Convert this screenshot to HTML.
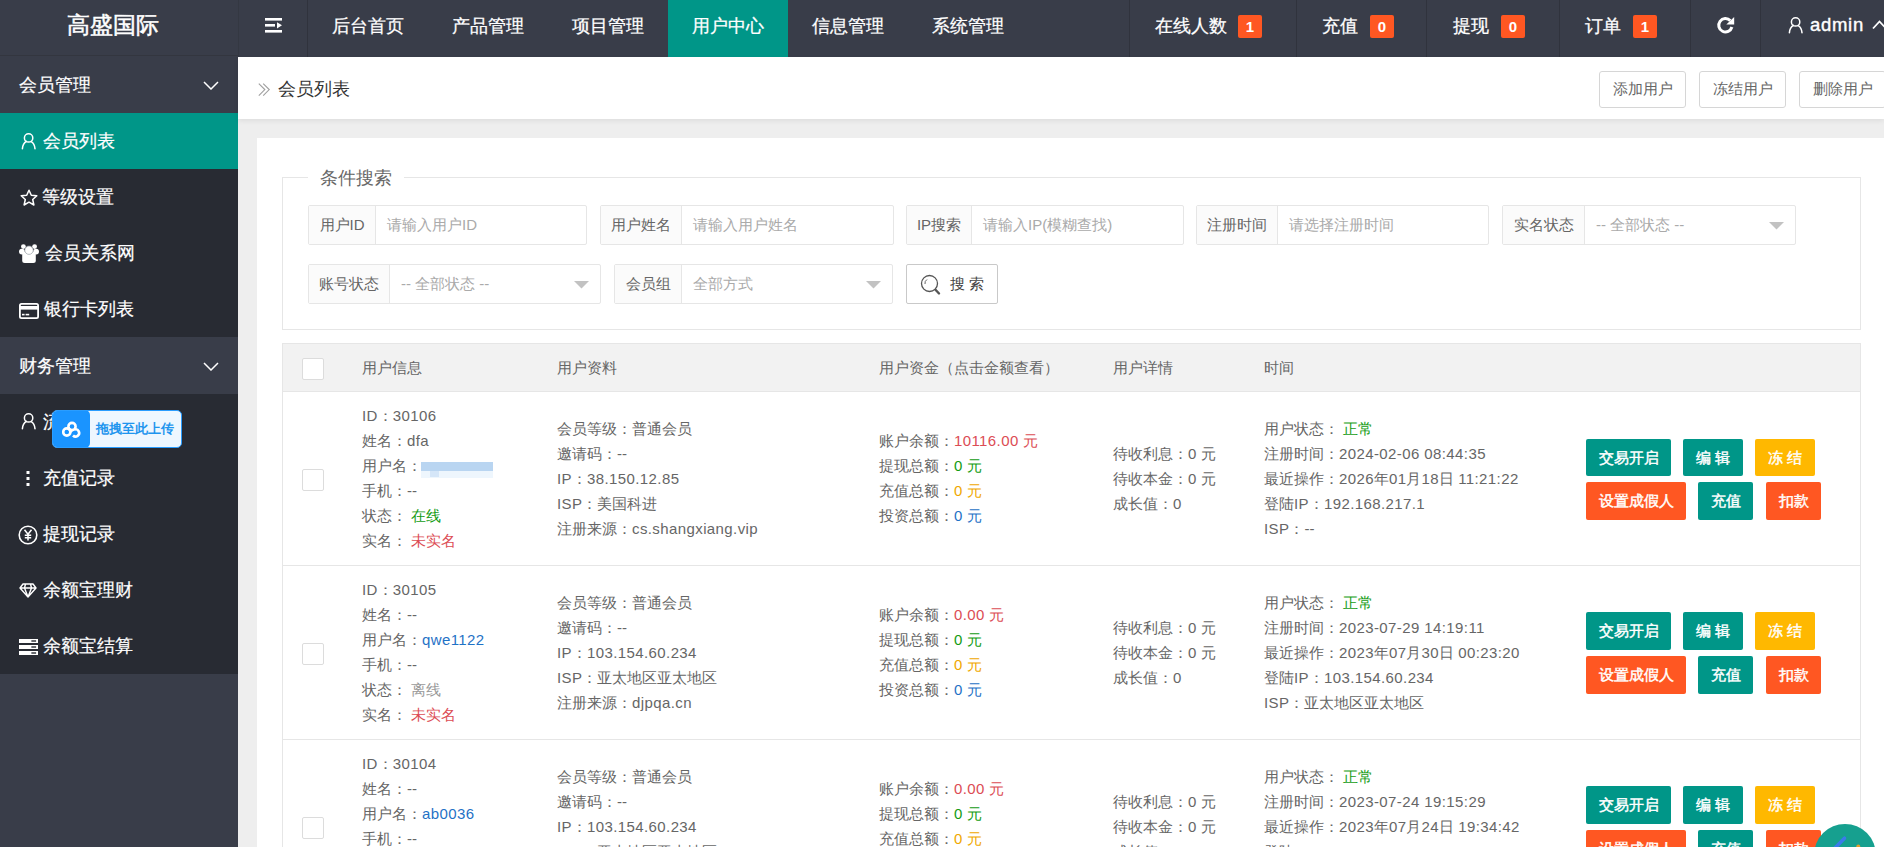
<!DOCTYPE html>
<html><head><meta charset="utf-8">
<style>
*{margin:0;padding:0;box-sizing:border-box}
html,body{width:1884px;height:847px;overflow:hidden;background:#eeeeee;font-family:"Liberation Sans",sans-serif;color:#666}
.abs{position:absolute}
#hdr{position:absolute;left:0;top:0;width:1884px;height:57px;background:#393D49}
#logo{position:absolute;left:0;top:0;width:238px;height:56px;border-bottom:1px solid #33363f;color:#fff;font-size:23px;line-height:51px;padding-left:67px;white-space:nowrap;-webkit-text-stroke:0.5px #fff}
.nav{position:absolute;top:0;height:56px;line-height:52px;font-size:18px;color:#fff;white-space:nowrap;-webkit-text-stroke:0.25px #fff}
.sep{position:absolute;top:0;width:1px;height:57px;background:#30333d}
.badge{display:inline-block;position:absolute;top:15px;width:24px;height:23px;background:#FF5722;border-radius:2px;color:#fff;font-size:15px;font-weight:bold;line-height:23px;text-align:center}
#side{position:absolute;left:0;top:56px;width:238px;height:791px;background:#393D49}
.grp{position:absolute;left:0;width:238px;height:57px;color:#fff;font-size:18px;line-height:59px;padding-left:19px;background:#393D49;-webkit-text-stroke:0.2px #fff}
.item{position:absolute;left:0;width:238px;height:56px;background:#282B33;color:#fff;font-size:18px;line-height:56px;white-space:nowrap}
.item.on{background:#009688}
.item span.t{position:absolute;left:43px;top:0;-webkit-text-stroke:0.2px #fff}
.item .ic{position:absolute}
#crumb{position:absolute;left:238px;top:57px;width:1646px;height:62px;background:#fff;box-shadow:0 2px 5px rgba(0,0,0,.07)}
.tbtn{position:absolute;top:71px;height:37px;width:87px;border:1px solid #d6d6d6;border-radius:3px;background:#fff;color:#666;font-size:15px;line-height:34px;text-align:center}
#card{position:absolute;left:257px;top:138px;width:1627px;height:709px;background:#fff}

.fs{position:absolute;left:25px;top:39px;width:1579px;height:153px;border:1px solid #e6e6e6}
.legend{position:absolute;left:25px;top:-13px;padding:0 12px;background:#fff;font-size:18px;line-height:26px;color:#666}
.ig{position:absolute;height:40px;border:1px solid #e6e6e6;border-radius:2px;background:#fff}
.ig .lb{position:absolute;left:0;top:0;height:38px;background:#FBFBFB;border-right:1px solid #e6e6e6;font-size:15px;line-height:38px;color:#666;text-align:center}
.ig .ph{position:absolute;top:0;font-size:15px;line-height:38px;color:#aaa;white-space:nowrap}
.ig svg{position:absolute;top:15px}
.th{position:absolute;left:25px;top:205px;width:1579px;height:49px;background:#f2f2f2;border:1px solid #e6e6e6}
.th div{position:absolute;top:0;line-height:47px;font-size:15px;color:#666;white-space:nowrap}
.cb{position:absolute;width:22px;height:22px;border:1px solid #dcdcdc;background:#fff;border-radius:2px}
.row{position:absolute;left:25px;width:1579px;height:174px;border:1px solid #e6e6e6;border-top:none;background:#fff}
.ln{position:absolute;font-size:15px;line-height:25px;color:#666;white-space:nowrap}
.btn{position:absolute;height:38px;border-radius:2px;color:#fff;font-size:15px;line-height:38px;text-align:center;white-space:nowrap;-webkit-text-stroke:0.45px #fff}
.g{background:#009688}.o{background:#FF5722}.y{background:#FFB800}
.l{letter-spacing:0.4px}.cr{color:#dc4c54}.cg{color:#139c13}.cy{color:#f0a800}.cbl{color:#1f72c6}.cgr{color:#999}
</style></head>
<body>
<div id="hdr">
  <div id="logo">高盛国际</div>
  <div class="sep" style="left:238px;background:#343842"></div>
  <svg class="abs" style="left:265px;top:18px" width="17" height="15" viewBox="0 0 17 15"><rect x="0" y="0" width="17" height="2.6" fill="#fff"/><rect x="0" y="6" width="10" height="2.6" fill="#fff"/><rect x="0" y="12" width="17" height="2.6" fill="#fff"/><path d="M12 4.2 L17 7.3 L12 10.4Z" fill="#fff"/></svg>
  <div class="sep" style="left:307px"></div>
  <div class="nav" style="left:332px">后台首页</div>
  <div class="nav" style="left:452px">产品管理</div>
  <div class="nav" style="left:572px">项目管理</div>
  <div class="abs" style="left:668px;top:0;width:120px;height:57px;background:#009688"></div>
  <div class="nav" style="left:692px;color:#fff">用户中心</div>
  <div class="nav" style="left:812px">信息管理</div>
  <div class="nav" style="left:932px">系统管理</div>

  <div class="sep" style="left:1129px"></div>
  <div class="nav" style="left:1155px">在线人数</div><span class="badge" style="left:1238px">1</span>
  <div class="sep" style="left:1296px"></div>
  <div class="nav" style="left:1322px">充值</div><span class="badge" style="left:1370px">0</span>
  <div class="sep" style="left:1426px"></div>
  <div class="nav" style="left:1453px">提现</div><span class="badge" style="left:1501px">0</span>
  <div class="sep" style="left:1559px"></div>
  <div class="nav" style="left:1585px">订单</div><span class="badge" style="left:1633px">1</span>
  <div class="sep" style="left:1690px"></div>
  <svg class="abs" style="left:1715px;top:15px" width="22" height="22" viewBox="0 0 22 22"><path d="M15.3 5.6 A6.7 6.7 0 1 0 16.9 12.0" fill="none" stroke="#fff" stroke-width="3"/><path d="M19.2 1.9 V9.6 H11.3Z" fill="#fff"/></svg>
  <div class="sep" style="left:1760px"></div>
  <svg class="abs" style="left:1788px;top:15px" width="15" height="19" viewBox="0 0 15 19"><circle cx="7.6" cy="6.9" r="4.2" fill="none" stroke="#fff" stroke-width="1.5"/><path d="M1.4 17.8 C1.6 14 3.1 11.6 5.4 10.3 M10.2 10.6 C12.3 11.8 13.7 14.2 14 17.8" fill="none" stroke="#fff" stroke-width="1.55" stroke-linecap="round"/></svg>
  <div class="nav" style="left:1810px;top:-1px;font-size:18.5px;letter-spacing:0.7px;color:#fff;-webkit-text-stroke:0.4px #fff">admin</div>
  <svg class="abs" style="left:1872px;top:19px" width="14" height="11" viewBox="0 0 14 11"><path d="M1 9.5 L7.5 2.5 L14 9.5" fill="none" stroke="#fff" stroke-width="1.8"/></svg>
</div>

<div id="side">
  <div class="grp" style="top:0">会员管理<svg class="abs" style="left:203px;top:25px" width="16" height="9" viewBox="0 0 16 9"><path d="M1 1 L8 8 L15 1" fill="none" stroke="#fff" stroke-width="1.5"/></svg></div>
  <div class="item on" style="top:57px"><svg class="ic" style="left:21px;top:18px" width="15" height="19" viewBox="0 0 15 19"><circle cx="7.6" cy="6.9" r="4.2" fill="none" stroke="#fff" stroke-width="1.5"/><path d="M1.4 17.8 C1.6 14 3.1 11.6 5.4 10.3 M10.2 10.6 C12.3 11.8 13.7 14.2 14 17.8" fill="none" stroke="#fff" stroke-width="1.55" stroke-linecap="round"/></svg><span class="t">会员列表</span></div>
  <div class="item" style="top:113px"><svg class="ic" style="left:19.5px;top:19.5px" width="18" height="18" viewBox="0 0 18 18"><path d="M9 1.2 L11.3 6.2 L16.8 6.8 L12.7 10.5 L13.9 16 L9 13.2 L4.1 16 L5.3 10.5 L1.2 6.8 L6.7 6.2Z" fill="none" stroke="#fff" stroke-width="1.5" stroke-linejoin="round"/></svg><span class="t" style="left:42px">等级设置</span></div>
  <div class="item" style="top:169px"><svg class="ic" style="left:19px;top:19px" width="20" height="19" viewBox="0 0 20 19"><circle cx="4.4" cy="2.6" r="2.4" fill="#fff"/><circle cx="15.6" cy="2.6" r="2.4" fill="#fff"/><circle cx="2.9" cy="7.6" r="2.9" fill="#fff"/><circle cx="17.1" cy="7.6" r="2.9" fill="#fff"/><path d="M3.2 16.5 V11 C3.2 8.5 6 7 10 7 C14 7 16.8 8.5 16.8 11 V16.5 Q16.8 19 14.3 19 H5.7 Q3.2 19 3.2 16.5Z" fill="#fff"/><circle cx="10" cy="6.2" r="4.2" fill="#fff" stroke="#9aa0a8" stroke-width="0.7"/></svg><span class="t" style="left:45px">会员关系网</span></div>
  <div class="item" style="top:225px"><svg class="ic" style="left:19px;top:22px" width="20" height="16" viewBox="0 0 20 16"><rect x="0.9" y="0.9" width="18.2" height="14.2" rx="1.6" fill="none" stroke="#fff" stroke-width="1.8"/><rect x="1" y="3" width="18" height="3.6" fill="#fff"/><rect x="3" y="10.8" width="2.6" height="1.6" fill="#fff"/><rect x="6.6" y="10.8" width="3.6" height="1.6" fill="#fff"/></svg><span class="t" style="left:44px">银行卡列表</span></div>
  <div class="grp" style="top:281px">财务管理<svg class="abs" style="left:203px;top:25px" width="16" height="9" viewBox="0 0 16 9"><path d="M1 1 L8 8 L15 1" fill="none" stroke="#fff" stroke-width="1.5"/></svg></div>
  <div class="item" style="top:338px"><svg class="ic" style="left:21px;top:17px" width="15" height="19" viewBox="0 0 15 19"><circle cx="7.6" cy="6.9" r="4.2" fill="none" stroke="#fff" stroke-width="1.5"/><path d="M1.4 17.8 C1.6 14 3.1 11.6 5.4 10.3 M10.2 10.6 C12.3 11.8 13.7 14.2 14 17.8" fill="none" stroke="#fff" stroke-width="1.55" stroke-linecap="round"/></svg><span class="t">流水记录</span></div>
  <div class="item" style="top:394px"><svg class="ic" style="left:26px;top:21px" width="4" height="15" viewBox="0 0 4 15"><rect x="0.5" y="0" width="3" height="3" fill="#fff"/><rect x="0.5" y="6" width="3" height="3" fill="#fff"/><rect x="0.5" y="12" width="3" height="3" fill="#fff"/></svg><span class="t">充值记录</span></div>
  <div class="item" style="top:450px"><svg class="ic" style="left:18px;top:19px" width="20" height="20" viewBox="0 0 20 20"><circle cx="10" cy="10" r="8.8" fill="none" stroke="#fff" stroke-width="1.6"/><path d="M6.5 4.8 L10 9.3 L13.5 4.8 M10 9.3 L10 15.5 M6.8 10.2 H13.2 M6.8 12.8 H13.2" fill="none" stroke="#fff" stroke-width="1.5"/></svg><span class="t">提现记录</span></div>
  <div class="item" style="top:506px"><svg class="ic" style="left:19px;top:21px" width="18" height="15" viewBox="0 0 18 15"><path d="M4 1 H14 L17 5 L9 14 L1 5Z M1 5 H17 M6.5 1 L5.5 5 L9 14 L12.5 5 L11.5 1" fill="none" stroke="#fff" stroke-width="1.4" stroke-linejoin="round"/></svg><span class="t">余额宝理财</span></div>
  <div class="item" style="top:562px"><svg class="ic" style="left:19px;top:21px" width="19" height="16" viewBox="0 0 20 16" preserveAspectRatio="none"><rect x="0" y="0" width="20" height="4" fill="#fff"/><rect x="0" y="6" width="20" height="4" fill="#fff"/><rect x="0" y="12" width="20" height="4" fill="#fff"/><rect x="13" y="1.3" width="5" height="1.4" fill="#282B33"/><rect x="13" y="7.3" width="5" height="1.4" fill="#282B33"/><rect x="13" y="13.3" width="5" height="1.4" fill="#282B33"/></svg><span class="t">余额宝结算</span></div>
  <div class="abs" style="left:52px;top:354px;width:130px;height:38px;border-radius:5px;background:#eef7ff;border:1px solid #2a9dff;overflow:hidden">
    <div class="abs" style="left:-1px;top:-1px;width:37.5px;height:38px;background:#1a94ff;border-radius:5px"></div>
    <svg class="abs" style="left:7px;top:9px" width="24" height="20" viewBox="0 0 24 20"><circle cx="12" cy="6.5" r="3.6" fill="none" stroke="#fff" stroke-width="2.6"/><circle cx="6.8" cy="12" r="3.6" fill="none" stroke="#fff" stroke-width="2.6"/><path d="M14.5 9.5 A3.6 3.6 0 1 1 13 15.5" fill="none" stroke="#fff" stroke-width="2.6"/><path d="M9 9 L12 12" stroke="#fff" stroke-width="2.6"/></svg>
    <div class="abs" style="left:43px;top:0;line-height:36px;font-size:13px;font-weight:bold;color:#1f95ee;white-space:nowrap">拖拽至此上传</div>
  </div>
</div>

<div id="crumb">
  <svg class="abs" style="left:19.5px;top:26px" width="14" height="14" viewBox="0 0 14 14"><path d="M0.8 0.6 L6.8 6.6 L0.8 12.6 M5.2 0.6 L11.2 6.6 L5.2 12.6" fill="none" stroke="#a0a0a0" stroke-width="1.15"/></svg>
  <div class="abs" style="left:40px;top:1px;line-height:62px;font-size:18px;color:#333">会员列表</div>
</div>
<div class="tbtn" style="left:1599px">添加用户</div>
<div class="tbtn" style="left:1699px">冻结用户</div>
<div class="tbtn" style="left:1799px">删除用户</div>

<div id="card">
<div class="fs"><div class="legend">条件搜索</div></div>
<div class="ig" style="left:51px;top:67px;width:279px"><div class="lb" style="width:67px">用户ID</div><div class="ph" style="left:78px">请输入用户ID</div></div><div class="ig" style="left:343px;top:67px;width:294px"><div class="lb" style="width:81px">用户姓名</div><div class="ph" style="left:92px">请输入用户姓名</div></div><div class="ig" style="left:649px;top:67px;width:278px"><div class="lb" style="width:65px">IP搜索</div><div class="ph" style="left:76px">请输入IP(模糊查找)</div></div><div class="ig" style="left:939px;top:67px;width:293px"><div class="lb" style="width:81px">注册时间</div><div class="ph" style="left:92px">请选择注册时间</div></div><div class="ig" style="left:1245px;top:67px;width:294px"><div class="lb" style="width:82px">实名状态</div><div class="ph" style="left:93px">-- 全部状态 --</div><svg style="left:266px;top:16px" width="15" height="8" viewBox="0 0 15 8"><path d="M0 0 H15 L7.5 7.5Z" fill="#c2c2c2"/></svg></div><div class="ig" style="left:51px;top:126px;width:293px"><div class="lb" style="width:81px">账号状态</div><div class="ph" style="left:92px">-- 全部状态 --</div><svg style="left:265px;top:16px" width="15" height="8" viewBox="0 0 15 8"><path d="M0 0 H15 L7.5 7.5Z" fill="#c2c2c2"/></svg></div><div class="ig" style="left:357px;top:126px;width:279px"><div class="lb" style="width:67px">会员组</div><div class="ph" style="left:78px">全部方式</div><svg style="left:251px;top:16px" width="15" height="8" viewBox="0 0 15 8"><path d="M0 0 H15 L7.5 7.5Z" fill="#c2c2c2"/></svg></div><div class="abs" style="left:649px;top:126px;width:92px;height:40px;border:1px solid #c9c9c9;border-radius:2px;background:#fff"><svg class="abs" style="left:13px;top:9px" width="22" height="22" viewBox="0 0 22 22"><circle cx="9.5" cy="9.5" r="8" fill="none" stroke="#555" stroke-width="1.3"/><path d="M15.5 15.8 L19 19.5" stroke="#555" stroke-width="2.4" stroke-linecap="round"/><path d="M5 10 A4.5 4.5 0 0 1 7 5.5" fill="none" stroke="#555" stroke-width="0.9"/></svg><div class="abs" style="left:43px;top:0;line-height:38px;font-size:15px;color:#444;letter-spacing:4px;white-space:nowrap">搜索</div></div><div class="th"><div class="cb" style="left:19px;top:14px"></div><div style="left:79px">用户信息</div><div style="left:274px">用户资料</div><div style="left:596px">用户资金（点击金额查看）</div><div style="left:830px">用户详情</div><div style="left:981px">时间</div></div>
<div class="row" style="top:254px"><div class="cb" style="left:19px;top:77px"></div><div class="ln" style="left:79px;top:11px"><span class="l">ID</span>：<span class="l">30106</span></div><div class="ln" style="left:79px;top:36px">姓名：<span class="l">dfa</span></div><div class="ln" style="left:79px;top:61px">用户名：<span style="display:inline-block;position:relative;width:72px;height:16px;vertical-align:-7px;margin-left:-1px"><span style="position:absolute;left:0;top:0;width:72px;height:9px;background:#b9d5f1"></span><span style="position:absolute;left:0;top:9px;width:72px;height:7px;background:#eef6fd"></span><span style="position:absolute;left:9px;top:9px;width:9px;height:6px;background:#d5e6f8"></span></span></div><div class="ln" style="left:79px;top:86px">手机：--</div><div class="ln" style="left:79px;top:111px">状态：&nbsp;<span class="cg">在线</span></div><div class="ln" style="left:79px;top:136px">实名：&nbsp;<span class="cr">未实名</span></div><div class="ln" style="left:274px;top:24px">会员等级：普通会员</div><div class="ln" style="left:274px;top:49px">邀请码：--</div><div class="ln" style="left:274px;top:74px"><span class="l">IP</span>：<span class="l">38.150.12.85</span></div><div class="ln" style="left:274px;top:99px"><span class="l">ISP</span>：美国科进</div><div class="ln" style="left:274px;top:124px">注册来源：<span class="l">cs.shangxiang.vip</span></div><div class="ln" style="left:596px;top:36px">账户余额：<span class="cr"><span class="l">10116.00</span> 元</span></div><div class="ln" style="left:596px;top:61px">提现总额：<span class="cg"><span class="l">0</span> 元</span></div><div class="ln" style="left:596px;top:86px">充值总额：<span class="cy"><span class="l">0</span> 元</span></div><div class="ln" style="left:596px;top:111px">投资总额：<span class="cbl"><span class="l">0</span> 元</span></div><div class="ln" style="left:830px;top:49px">待收利息：<span class="l">0</span> 元</div><div class="ln" style="left:830px;top:74px">待收本金：<span class="l">0</span> 元</div><div class="ln" style="left:830px;top:99px">成长值：<span class="l">0</span></div><div class="ln" style="left:981px;top:24px">用户状态：&nbsp;<span class="cg">正常</span></div><div class="ln" style="left:981px;top:49px">注册时间：<span class="l">2024-02-06 08:44:35</span></div><div class="ln" style="left:981px;top:74px">最近操作：<span class="l">2026</span>年<span class="l">01</span>月<span class="l">18</span>日 <span class="l">11:21:22</span></div><div class="ln" style="left:981px;top:99px">登陆<span class="l">IP</span>：<span class="l">192.168.217.1</span></div><div class="ln" style="left:981px;top:124px"><span class="l">ISP</span>：--</div><div class="btn g" style="left:1303px;top:47px;width:85px;height:37px;line-height:37px">交易开启</div><div class="btn g" style="left:1400px;top:47px;width:60px;height:37px;line-height:37px">编 辑</div><div class="btn y" style="left:1472px;top:47px;width:60px;height:37px;line-height:37px">冻 结</div><div class="btn o" style="left:1303px;top:90px;width:100px">设置成假人</div><div class="btn g" style="left:1415px;top:90px;width:55px">充值</div><div class="btn o" style="left:1483px;top:90px;width:55px">扣款</div></div><div class="row" style="top:428px"><div class="cb" style="left:19px;top:77px"></div><div class="ln" style="left:79px;top:11px"><span class="l">ID</span>：<span class="l">30105</span></div><div class="ln" style="left:79px;top:36px">姓名：--</div><div class="ln" style="left:79px;top:61px">用户名：<span class="cbl"><span class="l">qwe1122</span></span></div><div class="ln" style="left:79px;top:86px">手机：--</div><div class="ln" style="left:79px;top:111px">状态：&nbsp;<span class="cgr">离线</span></div><div class="ln" style="left:79px;top:136px">实名：&nbsp;<span class="cr">未实名</span></div><div class="ln" style="left:274px;top:24px">会员等级：普通会员</div><div class="ln" style="left:274px;top:49px">邀请码：--</div><div class="ln" style="left:274px;top:74px"><span class="l">IP</span>：<span class="l">103.154.60.234</span></div><div class="ln" style="left:274px;top:99px"><span class="l">ISP</span>：亚太地区亚太地区</div><div class="ln" style="left:274px;top:124px">注册来源：<span class="l">djpqa.cn</span></div><div class="ln" style="left:596px;top:36px">账户余额：<span class="cr"><span class="l">0.00</span> 元</span></div><div class="ln" style="left:596px;top:61px">提现总额：<span class="cg"><span class="l">0</span> 元</span></div><div class="ln" style="left:596px;top:86px">充值总额：<span class="cy"><span class="l">0</span> 元</span></div><div class="ln" style="left:596px;top:111px">投资总额：<span class="cbl"><span class="l">0</span> 元</span></div><div class="ln" style="left:830px;top:49px">待收利息：<span class="l">0</span> 元</div><div class="ln" style="left:830px;top:74px">待收本金：<span class="l">0</span> 元</div><div class="ln" style="left:830px;top:99px">成长值：<span class="l">0</span></div><div class="ln" style="left:981px;top:24px">用户状态：&nbsp;<span class="cg">正常</span></div><div class="ln" style="left:981px;top:49px">注册时间：<span class="l">2023-07-29 14:19:11</span></div><div class="ln" style="left:981px;top:74px">最近操作：<span class="l">2023</span>年<span class="l">07</span>月<span class="l">30</span>日 <span class="l">00:23:20</span></div><div class="ln" style="left:981px;top:99px">登陆<span class="l">IP</span>：<span class="l">103.154.60.234</span></div><div class="ln" style="left:981px;top:124px"><span class="l">ISP</span>：亚太地区亚太地区</div><div class="btn g" style="left:1303px;top:46px;width:85px;height:38px;line-height:38px">交易开启</div><div class="btn g" style="left:1400px;top:46px;width:60px;height:38px;line-height:38px">编 辑</div><div class="btn y" style="left:1472px;top:46px;width:60px;height:38px;line-height:38px">冻 结</div><div class="btn o" style="left:1303px;top:90px;width:100px">设置成假人</div><div class="btn g" style="left:1415px;top:90px;width:55px">充值</div><div class="btn o" style="left:1483px;top:90px;width:55px">扣款</div></div><div class="row" style="top:602px"><div class="cb" style="left:19px;top:77px"></div><div class="ln" style="left:79px;top:11px"><span class="l">ID</span>：<span class="l">30104</span></div><div class="ln" style="left:79px;top:36px">姓名：--</div><div class="ln" style="left:79px;top:61px">用户名：<span class="cbl"><span class="l">ab0036</span></span></div><div class="ln" style="left:79px;top:86px">手机：--</div><div class="ln" style="left:79px;top:111px">状态：&nbsp;<span class="cgr">离线</span></div><div class="ln" style="left:79px;top:136px">实名：&nbsp;<span class="cr">未实名</span></div><div class="ln" style="left:274px;top:24px">会员等级：普通会员</div><div class="ln" style="left:274px;top:49px">邀请码：--</div><div class="ln" style="left:274px;top:74px"><span class="l">IP</span>：<span class="l">103.154.60.234</span></div><div class="ln" style="left:274px;top:99px"><span class="l">ISP</span>：亚太地区亚太地区</div><div class="ln" style="left:274px;top:124px">注册来源：<span class="l">djpqa.cn</span></div><div class="ln" style="left:596px;top:36px">账户余额：<span class="cr"><span class="l">0.00</span> 元</span></div><div class="ln" style="left:596px;top:61px">提现总额：<span class="cg"><span class="l">0</span> 元</span></div><div class="ln" style="left:596px;top:86px">充值总额：<span class="cy"><span class="l">0</span> 元</span></div><div class="ln" style="left:596px;top:111px">投资总额：<span class="cbl"><span class="l">0</span> 元</span></div><div class="ln" style="left:830px;top:49px">待收利息：<span class="l">0</span> 元</div><div class="ln" style="left:830px;top:74px">待收本金：<span class="l">0</span> 元</div><div class="ln" style="left:830px;top:99px">成长值：<span class="l">0</span></div><div class="ln" style="left:981px;top:24px">用户状态：&nbsp;<span class="cg">正常</span></div><div class="ln" style="left:981px;top:49px">注册时间：<span class="l">2023-07-24 19:15:29</span></div><div class="ln" style="left:981px;top:74px">最近操作：<span class="l">2023</span>年<span class="l">07</span>月<span class="l">24</span>日 <span class="l">19:34:42</span></div><div class="ln" style="left:981px;top:99px">登陆<span class="l">IP</span>：<span class="l">103.154.60.234</span></div><div class="ln" style="left:981px;top:124px"><span class="l">ISP</span>：亚太地区亚太地区</div><div class="btn g" style="left:1303px;top:46px;width:85px;height:38px;line-height:38px">交易开启</div><div class="btn g" style="left:1400px;top:46px;width:60px;height:38px;line-height:38px">编 辑</div><div class="btn y" style="left:1472px;top:46px;width:60px;height:38px;line-height:38px">冻 结</div><div class="btn o" style="left:1303px;top:90px;width:100px">设置成假人</div><div class="btn g" style="left:1415px;top:90px;width:55px">充值</div><div class="btn o" style="left:1483px;top:90px;width:55px">扣款</div></div></div>
<div class="abs" style="left:1814px;top:824px;width:62px;height:62px;border-radius:50%;background:#16a08f"></div>
<svg class="abs" style="left:1814px;top:824px" width="62" height="30" viewBox="0 0 62 30"><path d="M30.5 14.2 L19 26" stroke="#3a7bea" stroke-width="3.6" stroke-linecap="round"/><circle cx="44.3" cy="22.5" r="2" fill="#e0a030"/></svg>
</body></html>
